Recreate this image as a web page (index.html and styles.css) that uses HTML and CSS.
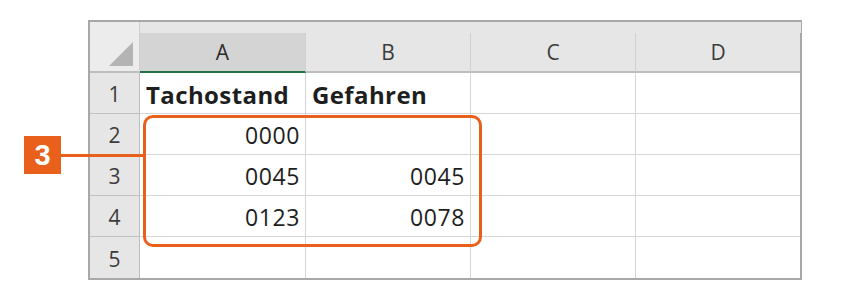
FILE: index.html
```html
<!DOCTYPE html>
<html>
<head>
  <meta charset="utf-8" />
  <title>Tachostand</title>
  <link rel="stylesheet" href="styles.css">
</head>
<body>
  <div class="page">
    <div class="sheet">
      <div class="corner"><span class="corner-tri"></span></div>
      <div class="col-head selected">A</div>
      <div class="col-head">B</div>
      <div class="col-head">C</div>
      <div class="col-head last">D</div>

      <div class="row-head">1</div>
      <div class="cell bold">Tachostand</div>
      <div class="cell bold">Gefahren</div>
      <div class="cell"></div>
      <div class="cell last"></div>

      <div class="row-head">2</div>
      <div class="cell num">0000</div>
      <div class="cell num"></div>
      <div class="cell"></div>
      <div class="cell last"></div>

      <div class="row-head">3</div>
      <div class="cell num">0045</div>
      <div class="cell num">0045</div>
      <div class="cell"></div>
      <div class="cell last"></div>

      <div class="row-head">4</div>
      <div class="cell num">0123</div>
      <div class="cell num">0078</div>
      <div class="cell"></div>
      <div class="cell last"></div>

      <div class="row-head bottom">5</div>
      <div class="cell bottom"></div>
      <div class="cell bottom"></div>
      <div class="cell bottom"></div>
      <div class="cell bottom last"></div>
    </div>

    <!-- callout over the sheet -->
    <div class="highlight"></div>
    <div class="callout-line"></div>
    <div class="callout">3</div>
  </div>
</body>
</html>
```

FILE: styles.css
```css
* {
  margin: 0;
  padding: 0;
  box-sizing: border-box;
}

body {
  background: #ffffff;
  font-family: 'Open Sans', 'Noto Sans', sans-serif;
  color: #1e1e1e;
}

.page {
  position: relative;
  width: 850px;
  height: 302px;
  padding: 20px 0 0 88px;
}

.sheet {
  width: 714px;
  display: grid;
  grid-template-columns: 50px 166px 165px 165px 164px;
  grid-template-rows: 51px repeat(5, 41px);
  border: 2px solid #a8a8a8;
  background: #ffffff;
}

.corner {
  background: #ececec;
  border-right: 1px solid #cfcfcf;
  border-bottom: 2px solid #bdbdbd;
  display: flex;
  align-items: flex-end;
  justify-content: flex-end;
  padding: 0 6px 5px 0;
}

.corner-tri {
  width: 24px;
  height: 24px;
  background: #b4b4b4;
  clip-path: polygon(100% 0, 100% 100%, 0 100%);
}

.col-head {
  background: #e6e6e6;
  border-bottom: 2px solid #bdbdbd;
  border-right: 1px solid #d0d0d0;
  display: flex;
  align-items: center;
  justify-content: center;
  padding-top: 10px;
  font-size: 21px;
  color: #3c3c3c;
  position: relative;
}

.col-head::after {
  content: '';
  position: absolute;
  top: 0;
  right: -1px;
  width: 1px;
  height: 11px;
  background: #e6e6e6;
}

.col-head.last {
  border-right: none;
}

.col-head.selected {
  background: linear-gradient(#e6e6e6 0, #e6e6e6 11px, #d4d4d4 11px);
  border-bottom-color: #217346;
  color: #2b2b2b;
}

.row-head {
  background: #e6e6e6;
  border-right: 1px solid #bdbdbd;
  border-bottom: 1px solid #c2c2c2;
  display: flex;
  align-items: center;
  justify-content: center;
  padding-top: 2px;
  font-size: 21px;
  color: #3c3c3c;
}

.cell {
  border-right: 1px solid #d6d6d6;
  border-bottom: 1px solid #d6d6d6;
  display: flex;
  align-items: center;
  padding: 2px 5px 0 6px;
  font-size: 23px;
  white-space: nowrap;
}

.cell.last {
  border-right: none;
}

.cell.bottom,
.row-head.bottom {
  border-bottom: none;
}

.cell.bold {
  font-size: 24px;
  font-weight: 700;
  letter-spacing: 0.4px;
}

.cell.num {
  justify-content: flex-end;
  letter-spacing: 0.6px;
}

.highlight {
  position: absolute;
  left: 143px;
  top: 115px;
  width: 339px;
  height: 132px;
  border: 3px solid #e8601c;
  border-radius: 10px;
}

.callout-line {
  position: absolute;
  left: 60px;
  top: 154px;
  width: 84px;
  height: 3px;
  background: #e8601c;
}

.callout {
  position: absolute;
  left: 24px;
  top: 136px;
  width: 37px;
  height: 38px;
  background: #e8601c;
  color: #ffffff;
  font-family: 'Liberation Sans', Arial, sans-serif;
  font-weight: 700;
  font-size: 29px;
  line-height: 38px;
  text-align: center;
}
```
